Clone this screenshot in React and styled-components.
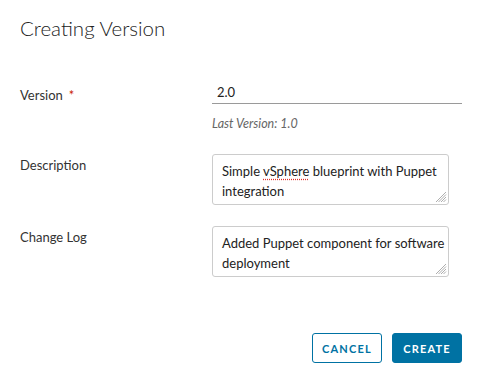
import React from 'react';
import styled, { createGlobalStyle } from 'styled-components';

const GlobalStyle = createGlobalStyle`
    html, body {
        margin: 0;
        padding: 0;
        background: #fff;
    }
    body {
        font-family: Lato, "Open Sans", sans-serif;
        color: #333;
    }
`;

const Modal = styled.div`
    width: 480px;
    height: 381px;
    box-sizing: border-box;
    padding: 16px 18px 0 20px;
    display: flex;
    flex-direction: column;
`;

const Title = styled.h3`
    margin: 0;
    font-size: 20.5px;
    font-weight: 300;
    line-height: 24px;
    color: #222;
`;

const Form = styled.div`
    margin-top: 40px;
    display: grid;
    grid-template-columns: 192px 1fr;
`;

const Label = styled.label`
    font-size: 13px;
    line-height: 20px;
    color: #333;
    padding-top: ${p => p.$top || 1}px;
`;

const Required = styled.span`
    color: #c92100;
    margin-left: 6px;
`;

const Field = styled.div`
    display: flex;
    flex-direction: column;
    margin-bottom: ${p => p.$gap || 0}px;
`;

const Input = styled.div`
    width: 250px;
    height: 24px;
    box-sizing: border-box;
    border-bottom: 1px solid #9a9a9a;
    padding-left: 5px;
    font-size: 13px;
    line-height: 24px;
    color: #222;
`;

const Helper = styled.div`
    margin-top: 12px;
    font-size: 12.5px;
    font-style: italic;
    color: #666;
    line-height: 16px;
`;

const TextArea = styled.div`
    position: relative;
    width: 237px;
    height: 51px;
    box-sizing: border-box;
    border: 1px solid #ccc;
    border-radius: 3px;
    padding: 6px 3px 5px 9px;
    font-size: 13px;
    line-height: 20px;
    color: #222;
`;

const Line = styled.div`
    white-space: nowrap;
`;

const Grip = styled.svg`
    position: absolute;
    right: 1px;
    bottom: 1px;
`;

const Misspelled = styled.span`
    text-decoration-line: underline;
    text-decoration-style: dotted;
    text-decoration-color: #e0302a;
    text-underline-offset: 3px;
`;

const Footer = styled.div`
    margin-top: auto;
    margin-bottom: 18px;
    display: flex;
    justify-content: flex-end;
    gap: 10px;
`;

const Button = styled.button`
    width: 70px;
    height: 30px;
    box-sizing: border-box;
    border-radius: 3px;
    border: 1px solid #0072a3;
    background: ${p => (p.$primary ? '#0072a3' : '#fff')};
    color: ${p => (p.$primary ? '#fff' : '#0072a3')};
    font-family: Lato, "Open Sans", sans-serif;
    font-size: 11px;
    font-weight: 700;
    letter-spacing: 1.2px;
    padding: 0;
`;

const ResizeGrip = () => (
    <Grip width="11" height="11" viewBox="0 0 11 11">
        <g stroke="#999" strokeWidth="0.8">
            <line x1="10" y1="0" x2="0" y2="10" />
            <line x1="10" y1="2.5" x2="2.5" y2="10" />
            <line x1="10" y1="5" x2="5" y2="10" />
            <line x1="10" y1="7.5" x2="7.5" y2="10" />
        </g>
    </Grip>
);

const App = () => {
    return (
        <>
            <GlobalStyle />
            <Modal>
                <Title>Creating Version</Title>
                <Form>
                    <Label $top={5}>Version<Required>*</Required></Label>
                    <Field $gap={22}>
                        <Input>2.0</Input>
                        <Helper>Last Version: 1.0</Helper>
                    </Field>

                    <Label>Description</Label>
                    <Field $gap={21}>
                        <TextArea>
                            <Line>Simple <Misspelled>vSphere</Misspelled> blueprint with Puppet</Line>
                            <Line>integration</Line>
                            <ResizeGrip />
                        </TextArea>
                    </Field>

                    <Label>Change Log</Label>
                    <Field>
                        <TextArea>
                            <Line>Added Puppet component for software</Line>
                            <Line>deployment</Line>
                            <ResizeGrip />
                        </TextArea>
                    </Field>
                </Form>
                <Footer>
                    <Button>CANCEL</Button>
                    <Button $primary>CREATE</Button>
                </Footer>
            </Modal>
        </>
    );
};

export default App;
